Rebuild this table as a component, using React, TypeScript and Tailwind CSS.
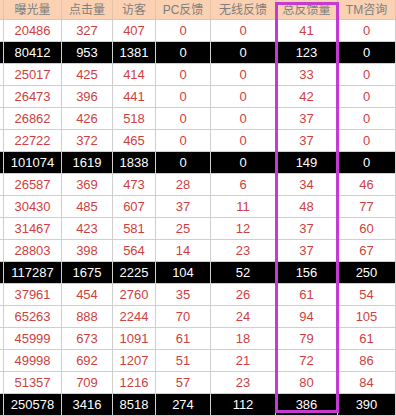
import React from 'react'

const widths = ['w-[4px]', 'w-[58px]', 'w-[51px]', 'w-[43px]', 'w-[55px]', 'w-[65px]', 'w-[62px]', 'w-[58px]']

const headers = ['', '曝光量', '点击量', '访客', 'PC反馈', '无线反馈', '总反馈量', 'TM咨询']

// [values, isTotal]
const rows: [string[], boolean][] = [
  [['20486', '327', '407', '0', '0', '41', '0'], false],
  [['80412', '953', '1381', '0', '0', '123', '0'], true],
  [['25017', '425', '414', '0', '0', '33', '0'], false],
  [['26473', '396', '441', '0', '0', '42', '0'], false],
  [['26862', '426', '518', '0', '0', '37', '0'], false],
  [['22722', '372', '465', '0', '0', '37', '0'], false],
  [['101074', '1619', '1838', '0', '0', '149', '0'], true],
  [['26587', '369', '473', '28', '6', '34', '46'], false],
  [['30430', '485', '607', '37', '11', '48', '77'], false],
  [['31467', '423', '581', '25', '12', '37', '60'], false],
  [['28803', '398', '564', '14', '23', '37', '67'], false],
  [['117287', '1675', '2225', '104', '52', '156', '250'], true],
  [['37961', '454', '2760', '35', '26', '61', '54'], false],
  [['65263', '888', '2244', '70', '24', '94', '105'], false],
  [['45999', '673', '1091', '61', '18', '79', '61'], false],
  [['49998', '692', '1207', '51', '21', '72', '86'], false],
  [['51357', '709', '1216', '57', '23', '80', '84'], false],
  [['250578', '3416', '8518', '274', '112', '386', '390'], true],
]

export default function App() {
  return (
    <div
      className="relative w-[396px] h-[416px] overflow-hidden bg-white"
      style={{ fontFamily: '"Liberation Sans", "Noto Sans CJK SC", sans-serif' }}
    >
      {/* Header */}
      <div className="flex h-[20px] bg-[#fad2b3]">
        {headers.map((h, i) => (
          <div
            key={i}
            className={`${widths[i]} shrink-0 flex items-center justify-center border-r border-b border-[#e8c2a4] text-[12px] text-[#7d7d7d] leading-none`}
          >
            {h}
          </div>
        ))}
      </div>

      {/* Data rows */}
      {rows.map(([vals, total], r) => (
        <div key={r} className={`flex h-[22px] ${total ? 'bg-black' : 'bg-white'}`}>
          <div className={`${widths[0]} shrink-0 border-r border-b border-[#cfcfcf]`} />
          {vals.map((v, i) => (
            <div
              key={i}
              className={`${widths[i + 1]} shrink-0 flex items-center justify-center border-r border-b border-[#cfcfcf] text-[13px] leading-none ${
                total ? 'text-white' : 'text-[#cf4040]'
              }`}
            >
              {v}
            </div>
          ))}
        </div>
      ))}

      {/* Highlight box around 总反馈量 */}
      <div className="absolute left-[275px] top-[2px] w-[64px] h-[411px] border-[3px] border-[#c53ad3] pointer-events-none" />
    </div>
  )
}
